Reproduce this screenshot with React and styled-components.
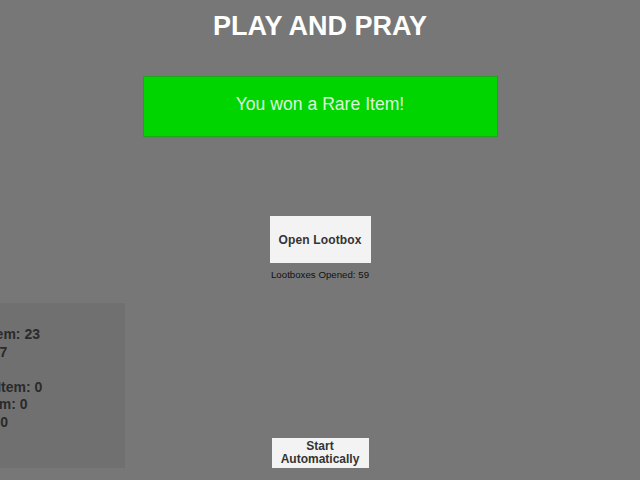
import React from "react";
import styled, { createGlobalStyle } from "styled-components";

const Global = createGlobalStyle`
  html, body {
    margin: 0;
    padding: 0;
    background: #777777;
    overflow: hidden;
  }
  body {
    font-family: "Liberation Sans", Arial, sans-serif;
  }
`;

const Page = styled.div`
  width: 640px;
  height: 480px;
  display: flex;
  flex-direction: column;
  align-items: center;
  overflow: hidden;
`;

const Title = styled.h1`
  margin: 11px 0 0;
  font-size: 27px;
  line-height: 30px;
  font-weight: 700;
  color: #ffffff;
`;

const ResultBanner = styled.div`
  margin-top: 35px;
  width: 355px;
  height: 61px;
  box-sizing: border-box;
  background: #00d500;
  border: 1px solid #1fa31f;
  display: flex;
  align-items: center;
  justify-content: center;
  padding-bottom: 4px;
  color: #dcf5dc;
  font-size: 17.6px;
`;

const ActionButton = styled.button`
  box-sizing: border-box;
  border: none;
  background: #f3f3f3;
  color: #333333;
  font-family: "Liberation Sans", Arial, sans-serif;
  font-weight: 700;
  font-size: 12px;
  padding: 0;
  cursor: pointer;
  width: ${(p) => p.$w}px;
  height: ${(p) => p.$h}px;
  line-height: ${(p) => p.$lh || 14}px;
  letter-spacing: ${(p) => p.$ls || 0}px;
`;

const OpenButton = styled(ActionButton)`
  margin-top: 79px;
`;

const Counter = styled.div`
  margin-top: 6px;
  font-size: 9.7px;
  line-height: 12px;
  color: #111111;
`;

const BottomRow = styled.div`
  margin-top: 22px;
  width: 640px;
  height: 165px;
  display: grid;
  grid-template-columns: 1fr auto 1fr;
  align-items: end;
`;

const StatsPanel = styled.div`
  justify-self: start;
  margin-left: -97.5px;
  width: 222.5px;
  height: 165px;
  box-sizing: border-box;
  padding: 23px 0 0 20px;
  background: #707070;
  color: #2a2a2a;
  font-size: 14px;
  font-weight: 700;
  line-height: 17.5px;
  white-space: nowrap;
`;

const StatLine = styled.div`
  height: 17.5px;
`;

const stats = [
  "Common Item: 23",
  "Mega Item: 7",
  "",
  "Legendary Item: 0",
  "Mythical Item: 0",
  "Great Item: 0",
];

export default function App() {
  return (
    <>
      <Global />
      <Page>
        <Title>PLAY AND PRAY</Title>
        <ResultBanner>You won a Rare Item!</ResultBanner>
        <OpenButton $w={101} $h={47} $ls={0.15}>
          Open Lootbox
        </OpenButton>
        <Counter>Lootboxes Opened: 59</Counter>
        <BottomRow>
          <StatsPanel>
            {stats.map((s, i) => (
              <StatLine key={i}>{s}</StatLine>
            ))}
          </StatsPanel>
          <ActionButton $w={97} $h={30} $lh={13.5}>
            Start
            <br />
            Automatically
          </ActionButton>
          <div />
        </BottomRow>
      </Page>
    </>
  );
}
